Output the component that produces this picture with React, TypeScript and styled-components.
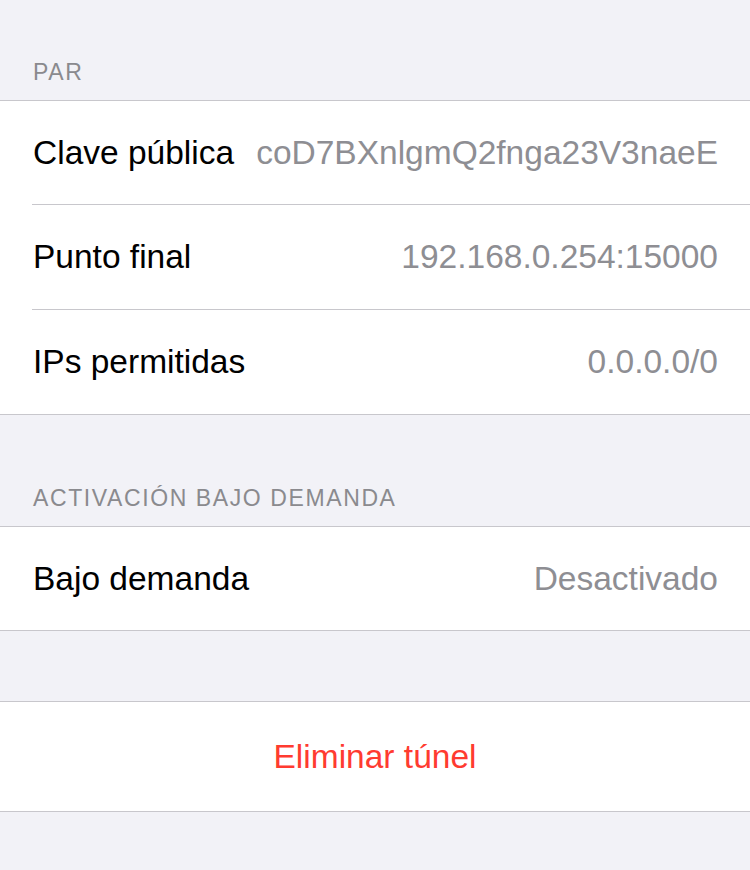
import React from "react";
import styled, { createGlobalStyle } from "styled-components";

const GlobalStyle = createGlobalStyle`
  html, body {
    margin: 0;
    padding: 0;
    background: #f2f2f7;
  }
  body {
    font-family: "Liberation Sans", Arial, sans-serif;
    -webkit-font-smoothing: antialiased;
  }
`;

const Page = styled.div`
  width: 750px;
  min-height: 870px;
  background: #f2f2f7;
  display: flex;
  flex-direction: column;
`;

const SectionHeader = styled.div<{ $height: number }>`
  height: ${(p) => p.$height}px;
  box-sizing: border-box;
  display: flex;
  align-items: flex-end;
  padding: 0 33px 14px;
  font-size: 23px;
  line-height: 28px;
  letter-spacing: 1.6px;
  color: #8a8a8e;
  text-transform: uppercase;
`;

const Spacer = styled.div<{ $height: number }>`
  height: ${(p) => p.$height}px;
`;

const Group = styled.div`
  background: #ffffff;
  border-top: 1px solid #c8c7cc;
  border-bottom: 1px solid #c8c7cc;
  display: flex;
  flex-direction: column;
`;

const Row = styled.div`
  height: 104px;
  display: flex;
  align-items: center;
  padding: 0 32px 0 33px;
  font-size: 33.5px;
  white-space: nowrap;

  &:first-child {
    height: 103px;
  }
  & + & {
    border-top: 1px solid #c8c7cc;
    margin-left: 32px;
    padding-left: 1px;
  }
`;

const Label = styled.span`
  color: #000000;
  flex: none;
`;

const Value = styled.span`
  color: #8e8e93;
  flex: 1;
  min-width: 0;
  overflow: hidden;
  text-align: right;
  margin-left: 19px;
`;

const DangerButton = styled.div`
  height: 109px;
  display: flex;
  align-items: center;
  justify-content: center;
  font-size: 33.5px;
  color: #ff3b30;
`;

type Item = { label: string; value: string };

const peer: Item[] = [
  { label: "Clave pública", value: "coD7BXnlgmQ2fnga23V3naeE" },
  { label: "Punto final", value: "192.168.0.254:15000" },
  { label: "IPs permitidas", value: "0.0.0.0/0" },
];

const onDemand: Item[] = [{ label: "Bajo demanda", value: "Desactivado" }];

export default function App() {
  return (
    <>
      <GlobalStyle />
      <Page>
        <SectionHeader $height={100}>Par</SectionHeader>
        <Group>
          {peer.map((it) => (
            <Row key={it.label}>
              <Label>{it.label}</Label>
              <Value>{it.value}</Value>
            </Row>
          ))}
        </Group>
        <SectionHeader $height={111}>Activación bajo demanda</SectionHeader>
        <Group>
          {onDemand.map((it) => (
            <Row key={it.label}>
              <Label>{it.label}</Label>
              <Value>{it.value}</Value>
            </Row>
          ))}
        </Group>
        <Spacer $height={70} />
        <Group>
          <DangerButton>Eliminar túnel</DangerButton>
        </Group>
      </Page>
    </>
  );
}
